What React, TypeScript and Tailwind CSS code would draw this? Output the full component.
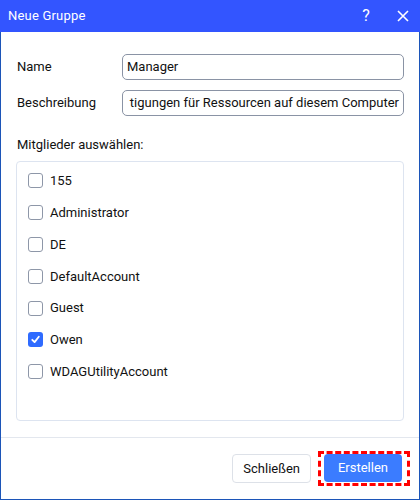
import React from "react";

const members = [
  { name: "155", checked: false },
  { name: "Administrator", checked: false },
  { name: "DE", checked: false },
  { name: "DefaultAccount", checked: false },
  { name: "Guest", checked: false },
  { name: "Owen", checked: true },
  { name: "WDAGUtilityAccount", checked: false },
];

function Box({ checked }: { checked: boolean }) {
  if (checked) {
    return (
      <div className="w-[15px] h-[15px] rounded-[3px] bg-[#2f6bff] flex items-center justify-center">
        <svg width="11" height="11" viewBox="0 0 12 12">
          <path d="M2.5 6.3 L5 8.8 L9.6 3" fill="none" stroke="white" strokeWidth="2" strokeLinecap="round" strokeLinejoin="round" />
        </svg>
      </div>
    );
  }
  return <div className="w-[15px] h-[15px] rounded-[3px] border border-[#8e97a8] bg-white" />;
}

export default function App() {
  return (
    <div
      className="w-[420px] h-[500px] flex flex-col bg-white border-x border-b border-[#1c55b8] text-[13px] text-[#111]"
      style={{ fontFamily: "Roboto, 'Liberation Sans', sans-serif" }}
    >
      <div className="h-[32px] shrink-0 bg-[#3355ff] flex items-center pl-[8px] text-white -mx-px">
        <span className="flex-1 tracking-[0.2px]">Neue Gruppe</span>
        <span className="w-[20px] text-center text-[16px] mr-[21px]">?</span>
        <svg width="12" height="12" viewBox="0 0 12 12" className="mr-[11px]">
          <path d="M1 1 L11 11 M11 1 L1 11" stroke="white" strokeWidth="1.6" />
        </svg>
      </div>
      <div className="flex-1 flex flex-col px-[15px] pt-[22px]">
        <div className="flex items-center h-[26px]">
          <span className="w-[106px] pl-[1px]">Name</span>
          <div className="flex-1 h-[26px] border border-[#8a93a5] rounded-[5px] flex items-center px-[4px] overflow-hidden whitespace-nowrap">
            Manager
          </div>
        </div>
        <div className="flex items-center h-[26px] mt-[10px]">
          <span className="w-[106px] pl-[1px]">Beschreibung</span>
          <div className="flex-1 h-[26px] border border-[#8a93a5] rounded-[5px] flex items-center justify-end px-[4px] overflow-hidden whitespace-nowrap">
            tigungen für Ressourcen auf diesem Computer
          </div>
        </div>
        <div className="mt-[21px] pl-[1px] leading-[16px]">Mitglieder auswählen:</div>
        <div className="mt-[8px] h-[260px] border border-[#dde4f0] rounded-[4px] flex flex-col pt-[3px] pl-[11px]">
          {members.map((m) => (
            <div key={m.name} className="flex items-center h-[31.8px] gap-[7px]">
              <Box checked={m.checked} />
              <span>{m.name}</span>
            </div>
          ))}
        </div>
      </div>
      <div className="h-[62px] shrink-0 border-t border-[#e3e7ee] flex items-center justify-end pr-[9px] gap-[7px]">
        <button className="h-[29px] px-[10px] border border-[#dde1e8] rounded-[4px] bg-white text-[#111]">Schließen</button>
        <div className="border-[3px] border-dashed border-[#ff0000] pl-[3px] pr-[5px] pt-[0px] pb-[1px]">
          <button className="h-[28px] w-[78px] rounded-[4px] bg-[#3b7cff] text-white block">Erstellen</button>
        </div>
      </div>
    </div>
  );
}
